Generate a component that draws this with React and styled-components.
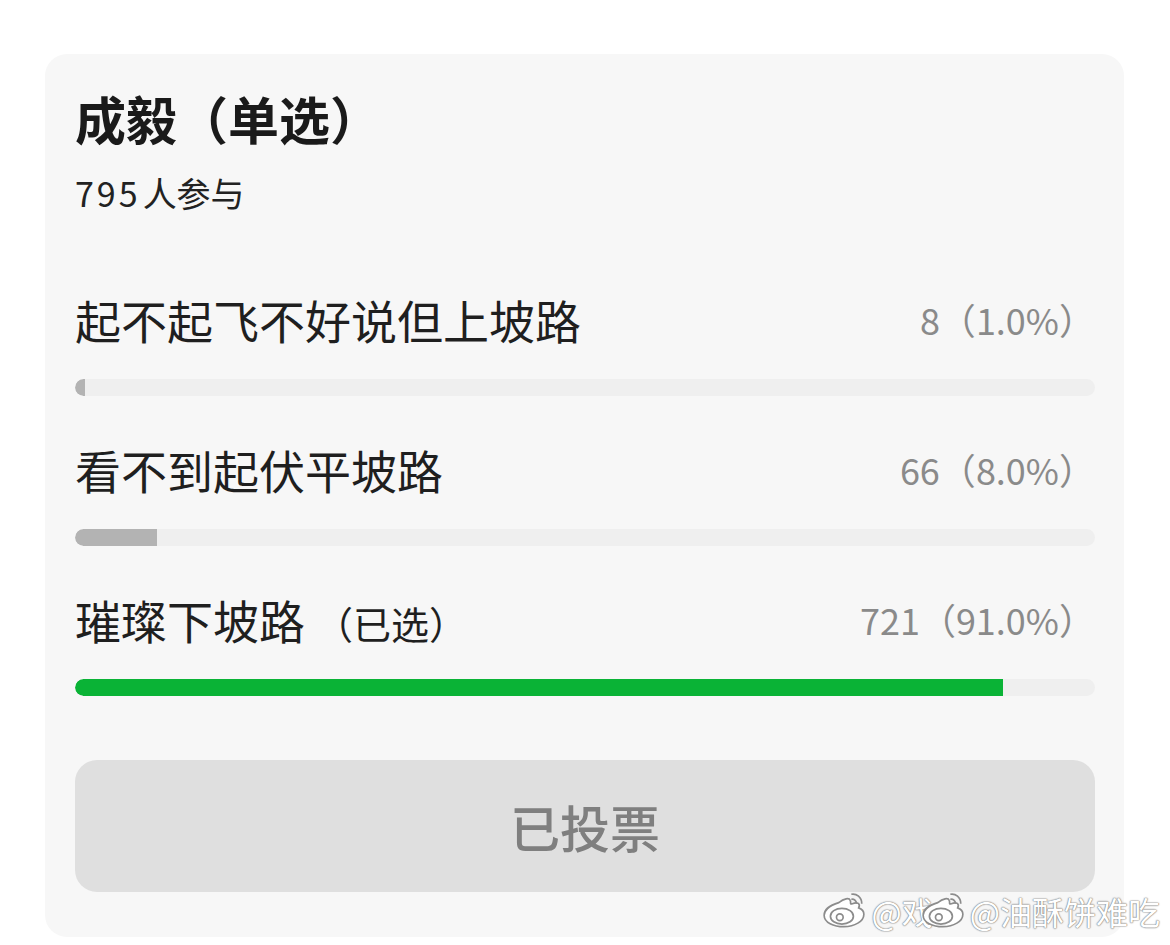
import React from "react";
import styled, { createGlobalStyle } from "styled-components";

const GlobalStyle = createGlobalStyle`
  body {
    margin: 0;
    background: #ffffff;
    font-family: "Noto Sans CJK SC", "Noto Sans", sans-serif;
  }
`;

const Page = styled.div`
  position: relative;
  min-height: 945px;
  padding: 54px 0 0 45px;
  box-sizing: border-box;
`;

const Card = styled.section`
  width: 1079px;
  box-sizing: border-box;
  background: #f7f7f7;
  border-radius: 22px;
  padding: 34px 29px 45px 30px;
`;

const Title = styled.h1`
  margin: 0;
  font-size: 51px;
  line-height: 60px;
  font-weight: 700;
  color: #1a1a1a;
`;

const Meta = styled.p`
  margin: 25px 0 0;
  font-size: 34px;
  line-height: 40px;
  color: #222222;
`;

const Digits = styled.span`
  letter-spacing: 3px;
  margin-right: 2px;
`;

const OptionList = styled.ul`
  list-style: none;
  margin: 78px 0 0;
  padding: 0;
  display: flex;
  flex-direction: column;
  gap: 45px;
`;

const Option = styled.li`
  display: flex;
  flex-direction: column;
  gap: 32px;
`;

const Row = styled.div`
  display: flex;
  align-items: center;
  justify-content: space-between;
  height: 56px;
`;

const Label = styled.span`
  font-size: 46px;
  color: #1f1f1f;
`;

const Chosen = styled.span`
  margin-left: 10px;
  font-size: 38px;
`;

const Count = styled.span`
  font-size: 36px;
  color: #8a8a8a;
`;

const Track = styled.div`
  height: 17px;
  border-radius: 9px;
  background: #efefef;
  overflow: hidden;
`;

const Fill = styled.div`
  height: 100%;
  border-radius: 9px 0 0 9px;
  background: ${(p) => (p.$chosen ? "#0ab336" : "#b3b3b3")};
`;

const VotedButton = styled.button`
  display: block;
  width: 100%;
  height: 132px;
  margin-top: 64px;
  border: 0;
  border-radius: 22px;
  background: #dfdfdf;
  color: #7f7f7f;
  font-family: inherit;
  font-size: 50px;
  font-weight: 500;
`;

const Watermark = styled.div`
  position: absolute;
  right: 10px;
  top: 888px;
  display: flex;
  align-items: center;
  font-size: 32px;
  line-height: 46px;
  color: #ffffff;
  text-shadow: 0 0 1px #7f7f7f, 0 0 1px #7f7f7f, 0 0 2px #9a9a9a;
  pointer-events: none;
`;

const Mark = styled.span`
  display: flex;
  align-items: center;
  gap: 4px;
  margin-left: ${(p) => p.$shift || 0}px;
`;

const WeiboLogo = () => (
  <svg width="46" height="42" viewBox="0 0 44 40">
    <g fill="#ffffff" stroke="#8c8c8c" strokeWidth="1.6">
      <path d="M17 12c5-4 10-5 11-2 1 2-1 4 2 3 5-2 8 0 6 4 3 1 5 3 5 6 0 7-9 12-19 12C12 35 3 31 3 24c0-4 4-9 14-12z" />
      <ellipse cx="20" cy="25" rx="11" ry="7.5" />
      <circle cx="18" cy="26" r="3.2" />
      <path d="M29 4c5-1 10 3 10 9" fill="none" />
      <path d="M29 9c2-1 5 1 5 4" fill="none" />
    </g>
  </svg>
);

const options = [
  { label: "起不起飞不好说但上坡路", count: 8, pct: 1.0 },
  { label: "看不到起伏平坡路", count: 66, pct: 8.0 },
  { label: "璀璨下坡路", count: 721, pct: 91.0, chosen: true },
];

export default function App() {
  return (
    <Page>
      <GlobalStyle />
      <Card>
        <Title>成毅（单选）</Title>
        <Meta>
          <Digits>795</Digits>人参与
        </Meta>
        <OptionList>
          {options.map((o) => (
            <Option key={o.label}>
              <Row>
                <Label>
                  {o.label}
                  {o.chosen && <Chosen>（已选）</Chosen>}
                </Label>
                <Count>
                  {o.count}（{o.pct.toFixed(1)}%）
                </Count>
              </Row>
              <Track>
                <Fill $chosen={o.chosen} style={{ width: `${o.pct}%` }} />
              </Track>
            </Option>
          ))}
        </OptionList>
        <VotedButton disabled>已投票</VotedButton>
      </Card>
      <Watermark>
        <Mark>
          <WeiboLogo />
          @戏
        </Mark>
        <Mark $shift={-14}>
          <WeiboLogo />
          @油酥饼难吃
        </Mark>
      </Watermark>
    </Page>
  );
}
